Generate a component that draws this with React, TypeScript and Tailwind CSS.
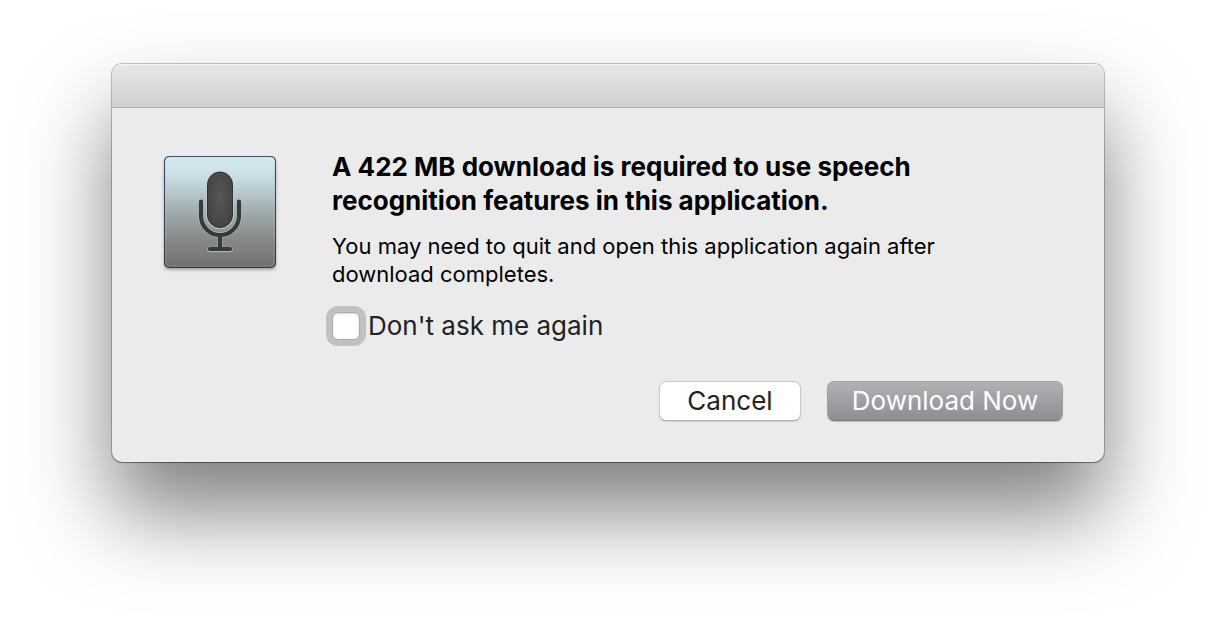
import { useState } from "react";

function MicrophoneIcon() {
  return (
    <svg viewBox="0 0 112 112" className="size-28 shrink-0 overflow-visible" role="img" aria-label="Microphone">
      <defs>
        <linearGradient id="tile" x1="0" y1="0" x2="0" y2="1">
          <stop offset="0" stopColor="#d3e7ee" />
          <stop offset="0.15" stopColor="#cbe0e7" />
          <stop offset="0.35" stopColor="#b5c4c8" />
          <stop offset="0.5" stopColor="#a0abac" />
          <stop offset="0.75" stopColor="#868989" />
          <stop offset="1" stopColor="#72706e" />
        </linearGradient>
        <linearGradient id="edge" x1="0" y1="0" x2="0" y2="1">
          <stop offset="0" stopColor="#3f5272" />
          <stop offset="1" stopColor="#33383c" />
        </linearGradient>
        <linearGradient id="shine" x1="0" y1="0" x2="0" y2="1">
          <stop offset="0" stopColor="#d6ecf4" />
          <stop offset="1" stopColor="#858686" />
        </linearGradient>
        <radialGradient id="capsule" cx="0.5" cy="0.45" r="0.6">
          <stop offset="0" stopColor="#575757" />
          <stop offset="1" stopColor="#434343" />
        </radialGradient>
        <filter id="drop" x="-10%" y="-10%" width="120%" height="125%" colorInterpolationFilters="sRGB">
          <feDropShadow dx="0" dy="2" stdDeviation="1.5" floodOpacity="0.3" />
        </filter>
      </defs>
      <rect width="112" height="112" rx="5" fill="url(#edge)" filter="url(#drop)" />
      <rect x="1.3" y="1.3" width="109.4" height="109.4" rx="4" fill="url(#tile)" />
      <rect x="1.8" y="1.8" width="108.4" height="108.4" rx="3.5" fill="none" stroke="url(#shine)" strokeWidth="1" />
      <g fill="none" stroke="#c5d3d8" strokeOpacity="0.6" strokeLinecap="round">
        <path d="M37 46v14a19 19 0 0 0 38 0V46M56 80v13M46 93.5h20" strokeWidth="5.6" />
        <rect x="42.5" y="15.5" width="27" height="57" rx="13.5" strokeWidth="1.6" />
      </g>
      <rect x="43.5" y="16" width="25" height="55.5" rx="12.5" fill="url(#capsule)" stroke="#2f3030" strokeWidth="1" />
      <path
        d="M37 45.5v14.500a19 19 0 0 0 38 0V45.5M56 80v13M46 93h20"
        fill="none"
        stroke="#383939"
        strokeWidth="4.2"
        strokeLinecap="round"
      />
    </svg>
  );
}

export default function App() {
  const [skip, setSkip] = useState(false);
  return (
    <main className="min-h-screen overflow-hidden bg-white px-28 pt-16 pb-40 font-['Inter','Liberation_Sans',sans-serif] text-black">
      <section
        role="dialog"
        aria-labelledby="dialog-title"
        aria-describedby="dialog-text"
        className="rounded-[10px] bg-[#ebebeb] shadow-[0_0_0_1px_rgba(0,0,0,0.22),0_1px_1px_rgba(0,0,0,0.3),0_50px_86px_rgba(0,0,0,0.5)]"
      >
        <header className="h-11 rounded-t-[10px] border-b border-[#b0aeb1] bg-linear-to-b from-[#e9e7ea] to-[#d1cfd2] shadow-[inset_0_1px_0_#f5f4f6]" />
        <div className="flex gap-14 pt-[42px] pr-[41px] pb-[41px] pl-[52px]">
          <div className="pt-1.5">
            <MicrophoneIcon />
          </div>
          <div className="min-w-0 flex-1">
            <h1 id="dialog-title" className="max-w-[640px] text-[26px] leading-[34px] font-bold">
              A 422 MB download is required to use speech
              <br />
              recognition features in this application.
            </h1>
            <p id="dialog-text" className="mt-3.5 max-w-[640px] text-[22px] leading-7">
              You may need to quit and open this application again after
              <br />
              download completes.
            </p>
            <label className="mt-6 flex h-7 w-fit items-center gap-2 text-[26px] leading-7 text-[#222]">
              <input
                type="checkbox"
                checked={skip}
                onChange={(e) => setSkip(e.target.checked)}
                className="size-7 appearance-none rounded-md border border-[#aaa] bg-white shadow-[0_0_0_6px_#c1c1c3,inset_0_1px_2px_rgba(0,0,0,0.15)] checked:bg-[#8e8d92]"
              />
              Don't ask me again
            </label>
            <div className="mt-[41px] flex justify-end gap-[26px] text-[26px] leading-7">
              <button
                type="button"
                className="h-10 w-[142px] rounded-[7px] border border-[#c8c8c8] border-b-[#b0b0b0] bg-white text-[#222] shadow-[0_1px_1px_rgba(0,0,0,0.12)]"
              >
                Cancel
              </button>
              <button
                type="button"
                className="h-10 w-[236px] rounded-[7px] border border-[#a09fa4] border-b-[#7e7d82] bg-linear-to-b from-[#b2b1b6] to-[#8e8d92] text-white shadow-[0_1px_1px_rgba(0,0,0,0.2)]"
              >
                Download Now
              </button>
            </div>
          </div>
        </div>
      </section>
    </main>
  );
}
